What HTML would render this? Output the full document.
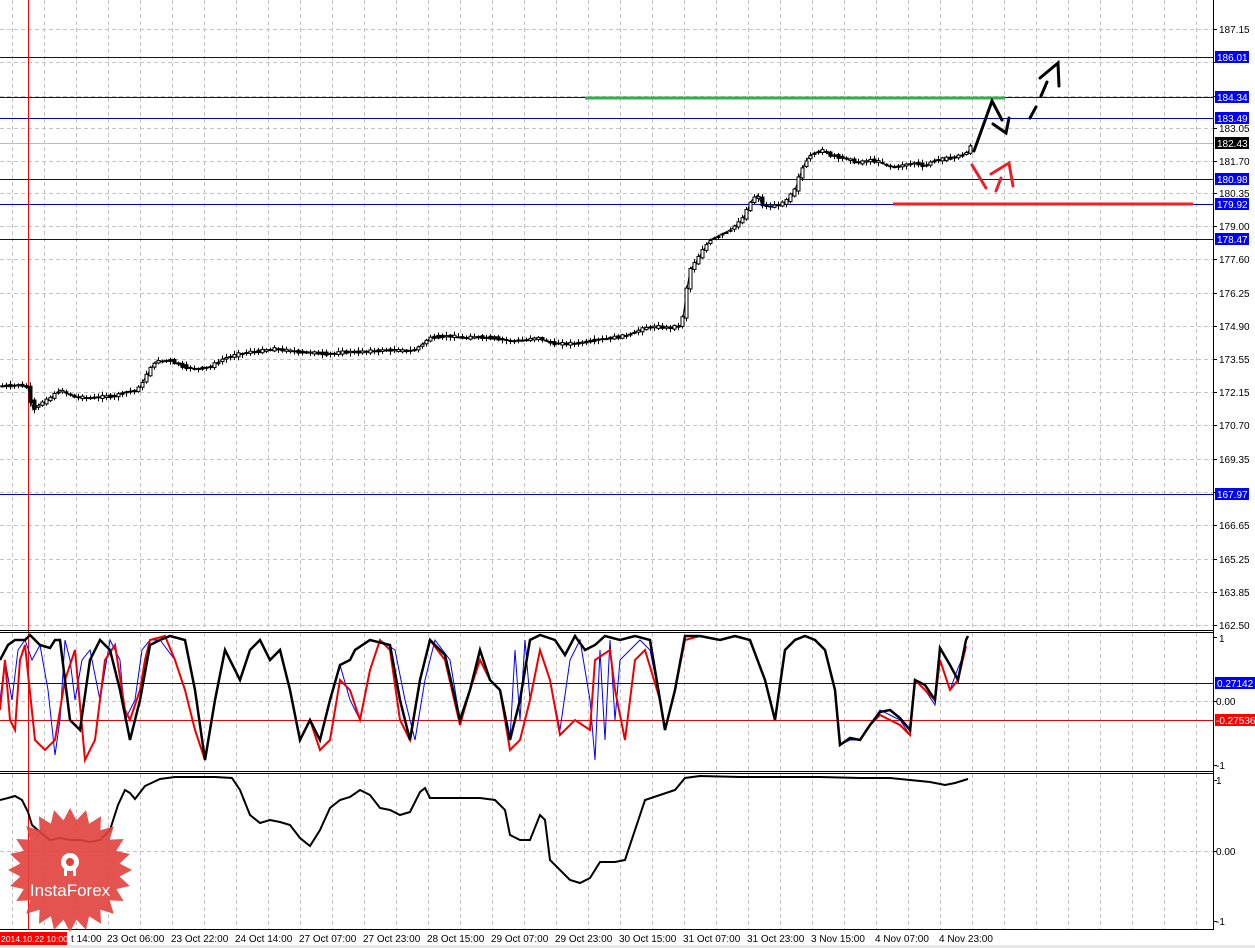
<!DOCTYPE html>
<html><head><meta charset="utf-8"><style>
html,body{margin:0;padding:0;background:#fff;width:1255px;height:948px;overflow:hidden;font-family:"Liberation Sans",sans-serif}
svg{display:block}
text{font-family:"Liberation Sans",sans-serif;font-size:10px}
</style></head><body>
<svg id="s" width="1255" height="948" xmlns="http://www.w3.org/2000/svg">
<rect width="1255" height="948" fill="#fff"/>
<g id="grid" stroke="#c4c4c4" stroke-dasharray="4,3" stroke-width="1"></g>
<g stroke="#0000cc" stroke-width="1">
<line x1="0" y1="57.5" x2="1213" y2="57.5"/>
<line x1="0" y1="97.5" x2="1213" y2="97.5"/>
<line x1="0" y1="118.5" x2="1213" y2="118.5"/>
<line x1="0" y1="179.5" x2="1213" y2="179.5"/>
<line x1="0" y1="204.5" x2="1213" y2="204.5"/>
<line x1="0" y1="239.5" x2="1213" y2="239.5"/>
<line x1="0" y1="494.5" x2="1213" y2="494.5"/>
<line x1="0" y1="683.5" x2="1213" y2="683.5"/>
</g>
<line x1="0" y1="143.5" x2="1213" y2="143.5" stroke="#bbb"/>
<line x1="0" y1="720.5" x2="1213" y2="720.5" stroke="#e00"/>
<line x1="585" y1="98" x2="1005" y2="98" stroke="#2fb04a" stroke-width="3"/>
<line x1="893" y1="204" x2="1193" y2="204" stroke="#e22" stroke-width="3"/>
<line x1="28.5" y1="0" x2="28.5" y2="930" stroke="#f00"/>
<polyline id="price" fill="none" stroke="#000" stroke-width="1" points="0,386 22,385 28,388 33,410 40,404 48,400 60,390 68,394 75,397 90,398 100,397 115,396 125,392 138,390 145,378 155,362 170,360 182,366 195,369 210,367 225,358 240,354 250,352 262,351 275,349 290,351 300,352 315,353 330,354 345,352 360,352 375,351 390,350 405,351 415,350 425,342 432,337 450,336 465,338 480,337 495,338 510,341 525,340 540,338 550,343 565,344 580,343 595,340 610,338 625,336 640,330 650,327 660,327 670,328 682,325 686,295 690,270 696,262 702,252 710,240 720,235 730,230 740,222 745,215 752,200 758,195 762,205 770,207 785,203 795,190 800,175 805,163 810,155 822,150 830,155 840,157 850,160 860,163 870,160 880,162 888,166 895,167 905,165 915,163 925,166 935,160 945,159 955,157 962,155 968,152 972,145"/>
<g id="candles" stroke="#000" fill="#fff" stroke-width="1"></g>
<g fill="none" stroke="#000" stroke-width="3" stroke-linecap="round" stroke-linejoin="miter">
<polyline points="974,151 992,101 1002,120"/>
<polyline points="993,124 1006,133 1009,118"/>
<line x1="1030" y1="118" x2="1036" y2="107"/>
<line x1="1041" y1="96" x2="1047" y2="82"/>
<polyline points="1040,78 1058,63 1059,86"/>
</g>
<g fill="none" stroke="#e8202a" stroke-width="3" stroke-linecap="round">
<line x1="972" y1="165" x2="986" y2="188"/>
<line x1="996" y1="191" x2="1001" y2="178"/>
<polyline points="991,174 1009,163 1013,186"/>
</g>
<polyline fill="none" stroke="#0000ff" stroke-width="1" points="0,700 5,660 12,700 18,650 25,640 32,660 40,645 48,690 55,755 60,720 65,640 70,660 75,700 82,660 90,650 100,700 110,640 120,660 125,720 135,700 142,650 150,640 160,640 175,660 185,690 195,730 205,760 215,700 225,650 240,680 250,650 260,640 270,660 280,650 290,690 300,740 310,720 320,740 330,700 340,665 350,700 360,720 370,670 380,640 395,650 405,700 415,740 425,680 435,640 450,660 460,720 470,690 480,660 490,680 500,690 510,740 515,650 520,720 525,640 530,700 540,650 550,680 560,730 570,660 580,640 590,700 595,760 600,650 605,740 610,640 615,720 620,660 630,650 640,640 650,650 660,700 665,730 675,690 685,640 700,636 720,640 735,636 750,640 765,680 775,720 785,650 795,640 805,636 815,640 825,650 835,690 840,745 850,740 860,740 870,725 880,710 890,715 900,720 910,735 915,680 925,690 935,705 940,660 950,690 958,668 966,650"/>
<polyline fill="none" stroke="#e00" stroke-width="2" points="0,710 5,660 10,720 15,730 20,660 25,645 35,740 45,750 55,740 65,680 75,650 85,760 95,740 105,660 115,645 125,710 130,720 140,690 145,660 150,640 165,636 175,660 185,690 195,730 205,760 215,700 225,650 240,680 250,650 260,640 270,660 280,650 290,690 300,740 310,720 320,750 330,740 340,680 350,690 360,720 370,670 380,640 390,650 400,720 410,740 420,680 430,640 445,660 460,725 470,690 480,660 490,680 500,690 510,750 520,740 530,700 540,650 550,680 560,735 575,720 590,730 595,660 610,650 615,690 625,740 635,660 645,650 660,700 665,730 675,690 685,640 700,636 720,640 735,636 750,640 765,680 775,720 785,650 795,640 805,636 815,640 825,650 835,690 840,745 850,738 860,740 870,725 880,715 890,720 900,725 910,735 915,680 925,690 935,700 940,660 950,690 958,680 966,646"/>
<polyline fill="none" stroke="#000" stroke-width="2.5" points="0,660 8,645 15,640 25,640 30,635 40,645 50,648 55,640 60,640 70,720 80,730 90,660 100,640 110,650 120,690 130,740 140,700 150,645 160,640 170,636 185,640 195,690 205,760 215,700 225,650 240,680 250,650 260,640 270,660 280,650 290,690 300,740 310,720 320,740 330,700 340,665 350,660 355,650 370,640 390,645 400,700 410,740 420,680 430,640 445,655 460,720 470,690 480,650 490,680 500,690 510,740 520,700 530,640 540,635 555,640 565,655 575,636 585,650 595,645 605,636 620,640 635,636 650,640 660,700 665,730 675,690 685,636 700,636 720,640 735,636 750,640 765,680 775,720 785,650 795,640 805,636 815,640 825,650 835,690 840,745 850,738 860,740 870,725 880,712 890,710 900,718 910,730 915,680 925,685 935,700 940,648 950,665 958,680 966,640 968,636"/>
<polyline fill="none" stroke="#000" stroke-width="2" points="0,800 8,798 15,796 22,800 28,812 32,825 40,832 50,840 60,838 70,840 80,840 90,842 100,840 110,830 118,805 125,790 130,793 135,799 145,786 160,779 175,777 190,777 215,777 232,778 240,790 250,815 260,823 270,820 280,822 290,825 300,838 310,846 320,830 330,808 340,800 350,797 360,790 370,795 380,808 390,810 400,815 410,812 420,792 425,788 430,798 440,798 460,798 480,798 495,800 505,810 510,835 520,840 530,840 540,815 545,820 550,860 560,870 570,880 580,883 590,878 600,862 615,862 625,860 635,830 645,800 660,795 675,790 685,778 700,776 740,777 780,777 820,777 860,778 890,778 910,780 930,782 945,785 955,783 968,779"/>
<g stroke="#000" fill="none" stroke-width="1">
<line x1="1213.5" y1="0" x2="1213.5" y2="930"/>
<line x1="0" y1="630.5" x2="1213" y2="630.5"/>
<line x1="0" y1="632.5" x2="1213" y2="632.5"/>
<line x1="0" y1="771.5" x2="1213" y2="771.5"/>
<line x1="0" y1="773.5" x2="1213" y2="773.5"/>
<line x1="0" y1="929.5" x2="1213" y2="929.5"/>
</g>
<g id="ticks" stroke="#000"></g>
<polygon id="star" fill="#e0403c" fill-opacity="0.9"/>
<g fill="#fff">
<circle cx="70" cy="862" r="9"/><circle cx="70" cy="862" r="4" fill="#e0403c"/>
<rect x="64" y="864" width="3" height="12"/><rect x="73" y="864" width="3" height="12"/>
</g>
<text x="70" y="896" text-anchor="middle" fill="#fff" style="font-size:17px">InstaForex</text>
<g fill="#000">
<text x="1219" y="33">187.15</text>
<text x="1219" y="132">183.05</text>
<text x="1219" y="165">181.70</text>
<text x="1219" y="197">180.35</text>
<text x="1219" y="230">179.00</text>
<text x="1219" y="263">177.60</text>
<text x="1219" y="297">176.25</text>
<text x="1219" y="330">174.90</text>
<text x="1219" y="363">173.55</text>
<text x="1219" y="396">172.15</text>
<text x="1219" y="429">170.70</text>
<text x="1219" y="463">169.35</text>
<text x="1219" y="529">166.65</text>
<text x="1219" y="563">165.25</text>
<text x="1219" y="596">163.85</text>
<text x="1219" y="629">162.50</text>
<text x="1219" y="642">1</text>
<text x="1216" y="705">0.00</text>
<text x="1216" y="769">-1</text>
<text x="1216" y="784">1</text>
<text x="1216" y="855">0.00</text>
<text x="1216" y="925">-1</text>
</g>
<g>
<rect x="1215" y="51" width="34" height="12" fill="#00f"/><text x="1217" y="61" fill="#fff">186.01</text>
<rect x="1215" y="91" width="34" height="12" fill="#00f"/><text x="1217" y="101" fill="#fff">184.34</text>
<rect x="1215" y="112" width="34" height="12" fill="#00f"/><text x="1217" y="122" fill="#fff">183.49</text>
<rect x="1215" y="137" width="34" height="12" fill="#000"/><text x="1217" y="147" fill="#fff">182.43</text>
<rect x="1215" y="173" width="34" height="12" fill="#00f"/><text x="1217" y="183" fill="#fff">180.98</text>
<rect x="1215" y="198" width="34" height="12" fill="#00f"/><text x="1217" y="208" fill="#fff">179.92</text>
<rect x="1215" y="233" width="34" height="12" fill="#00f"/><text x="1217" y="243" fill="#fff">178.47</text>
<rect x="1215" y="488" width="34" height="12" fill="#00f"/><text x="1217" y="498" fill="#fff">167.97</text>
<rect x="1215" y="677" width="40" height="12" fill="#00f"/><text x="1217" y="687" fill="#fff">0.27142</text>
<rect x="1215" y="714" width="40" height="12" fill="#f00"/><text x="1216" y="724" fill="#fff">-0.27536</text>
</g>
<rect x="0" y="932" width="67" height="13" fill="#f00"/>
<text x="1" y="942" fill="#fff" style="font-size:8.6px">2014.10.22 10:00</text>
<g fill="#000">
<text x="71" y="942">t 14:00</text>
<text x="107" y="942">23 Oct 06:00</text>
<text x="171" y="942">23 Oct 22:00</text>
<text x="235" y="942">24 Oct 14:00</text>
<text x="299" y="942">27 Oct 07:00</text>
<text x="363" y="942">27 Oct 23:00</text>
<text x="427" y="942">28 Oct 15:00</text>
<text x="491" y="942">29 Oct 07:00</text>
<text x="555" y="942">29 Oct 23:00</text>
<text x="619" y="942">30 Oct 15:00</text>
<text x="683" y="942">31 Oct 07:00</text>
<text x="747" y="942">31 Oct 23:00</text>
<text x="811" y="942">3 Nov 15:00</text>
<text x="875" y="942">4 Nov 07:00</text>
<text x="939" y="942">4 Nov 23:00</text>
</g>
<rect x="0" y="945" width="1255" height="3" fill="#e6e6e6"/>
</svg>
<script>
(function(){
var NS="http://www.w3.org/2000/svg";
function el(p,t,a){var e=document.createElementNS(NS,t);for(var k in a)e.setAttribute(k,a[k]);p.appendChild(e);return e;}
var g=document.getElementById("grid");
for(var x=12.5;x<1213;x+=32){el(g,"line",{x1:x,y1:0,x2:x,y2:630});el(g,"line",{x1:x,y1:633,x2:x,y2:771});el(g,"line",{x1:x,y1:774,x2:x,y2:929});}
[29,62,96,128,161,193,226,259,293,326,359,392,425,459,492,525,559,592,625].forEach(function(y){el(g,"line",{x1:0,y1:y+.5,x2:1213,y2:y+.5});});
[701,851].forEach(function(y){el(g,"line",{x1:0,y1:y+.5,x2:1213,y2:y+.5});});
var t=document.getElementById("ticks");
[29,62,96,128,161,193,226,259,293,326,359,392,425,459,492,525,559,592,625,637,701,765,780,851,921].forEach(function(y){el(t,"line",{x1:1213,y1:y+.5,x2:1217,y2:y+.5});});
var pts=[],cx=70,cy=870,n=24;
for(var i=0;i<2*n;i++){var r=i%2?50:62,a=Math.PI*i/n;pts.push((cx+r*Math.cos(a)).toFixed(1)+","+(cy+r*Math.sin(a)).toFixed(1));}
document.getElementById("star").setAttribute("points",pts.join(" "));
var P=document.getElementById("price").getAttribute("points").trim().split(/\s+/).map(function(s){var a=s.split(",");return [+a[0],+a[1]];});
function yAt(x){for(var i=1;i<P.length;i++){if(x<=P[i][0]){var a=P[i-1],b=P[i];return a[1]+(b[1]-a[1])*(x-a[0])/(b[0]-a[0]);}}return P[P.length-1][1];}
var c=document.getElementById("candles"),seed=7;
function rnd(){seed=(seed*9301+49297)%233280;return seed/233280;}
for(var xx=1;xx<972;xx+=4){var y0=yAt(xx-2),y1=yAt(xx+2);var j=(rnd()-0.5)*3;var o=y0+j,cl=y1-j;var tp=Math.min(o,cl)-1-rnd()*3,bt=Math.max(o,cl)+1+rnd()*3;
el(c,"line",{x1:xx+1.5,y1:tp,x2:xx+1.5,y2:bt});
var h=Math.max(1,Math.abs(cl-o));el(c,"rect",{x:xx,y:Math.min(o,cl),width:3,height:h,fill:(cl<o?"#fff":"#000")});}
})();
</script>
</body></html>
